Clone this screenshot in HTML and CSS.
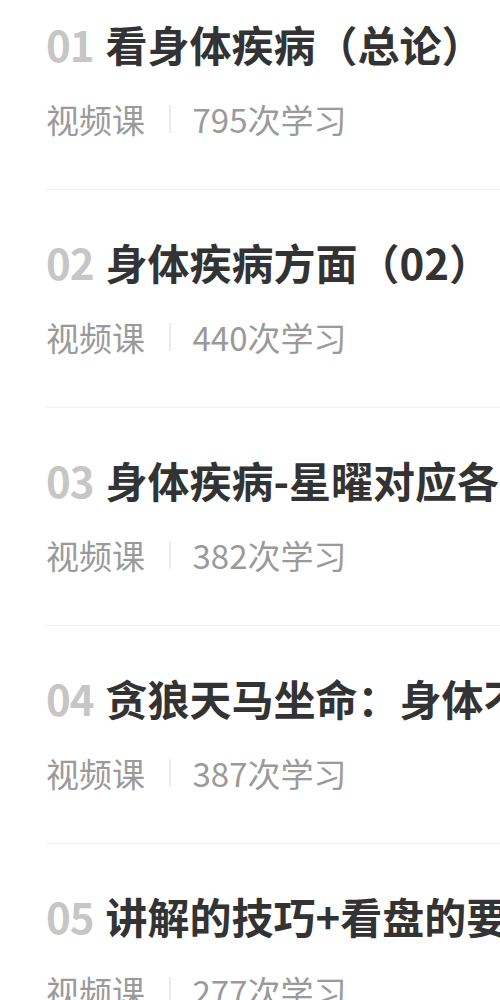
FILE: index.html
```html
<!DOCTYPE html>
<html lang="zh-CN">
<head>
<meta charset="utf-8">
<link rel="stylesheet" href="styles.css">
</head>
<body>
<ul class="list">
  <li class="item">
    <div class="title"><span class="num">01</span><span class="name">看身体疾病（总论）</span></div>
    <div class="meta"><span class="type">视频课</span><span class="sep"></span><span class="count">795次学习</span></div>
  </li>
  <li class="item">
    <div class="title"><span class="num">02</span><span class="name">身体疾病方面（02）</span></div>
    <div class="meta"><span class="type">视频课</span><span class="sep"></span><span class="count">440次学习</span></div>
  </li>
  <li class="item">
    <div class="title"><span class="num">03</span><span class="name">身体疾病-星曜对应各部位</span></div>
    <div class="meta"><span class="type">视频课</span><span class="sep"></span><span class="count">382次学习</span></div>
  </li>
  <li class="item">
    <div class="title"><span class="num">04</span><span class="name">贪狼天马坐命：身体不好</span></div>
    <div class="meta"><span class="type">视频课</span><span class="sep"></span><span class="count">387次学习</span></div>
  </li>
  <li class="item">
    <div class="title"><span class="num">05</span><span class="name">讲解的技巧+看盘的要点</span></div>
    <div class="meta"><span class="type">视频课</span><span class="sep"></span><span class="count">277次学习</span></div>
  </li>
</ul>
</body>
</html>
```

FILE: styles.css
```css
html, body {
  margin: 0;
  padding: 0;
  background: #ffffff;
  overflow: hidden;
}
body {
  width: 500px;
  height: 1000px;
  font-family: "Noto Sans CJK SC", "Noto Sans", sans-serif;
}
.list {
  list-style: none;
  margin: 0;
  padding: 0 0 0 46px;
}
.item {
  border-top: 1.5px solid #efefef;
  padding: 43px 0 48px 0;
}
.item:first-child {
  border-top: none;
  padding-top: 15px;
}
.title {
  display: flex;
  align-items: center;
  height: 56px;
  white-space: nowrap;
  font-size: 42px;
  font-weight: 700;
  color: #333333;
}
.num {
  color: #c6c6c6;
  letter-spacing: -1px;
  margin-right: 12px;
}
.name {
  color: #333333;
}
.meta {
  display: flex;
  align-items: center;
  height: 44px;
  margin-top: 26px;
  font-size: 33px;
  color: #9a9a9a;
  white-space: nowrap;
}
.sep {
  width: 1.5px;
  height: 28px;
  background: #ececec;
  margin: 0 22px 0 24px;
}
```
